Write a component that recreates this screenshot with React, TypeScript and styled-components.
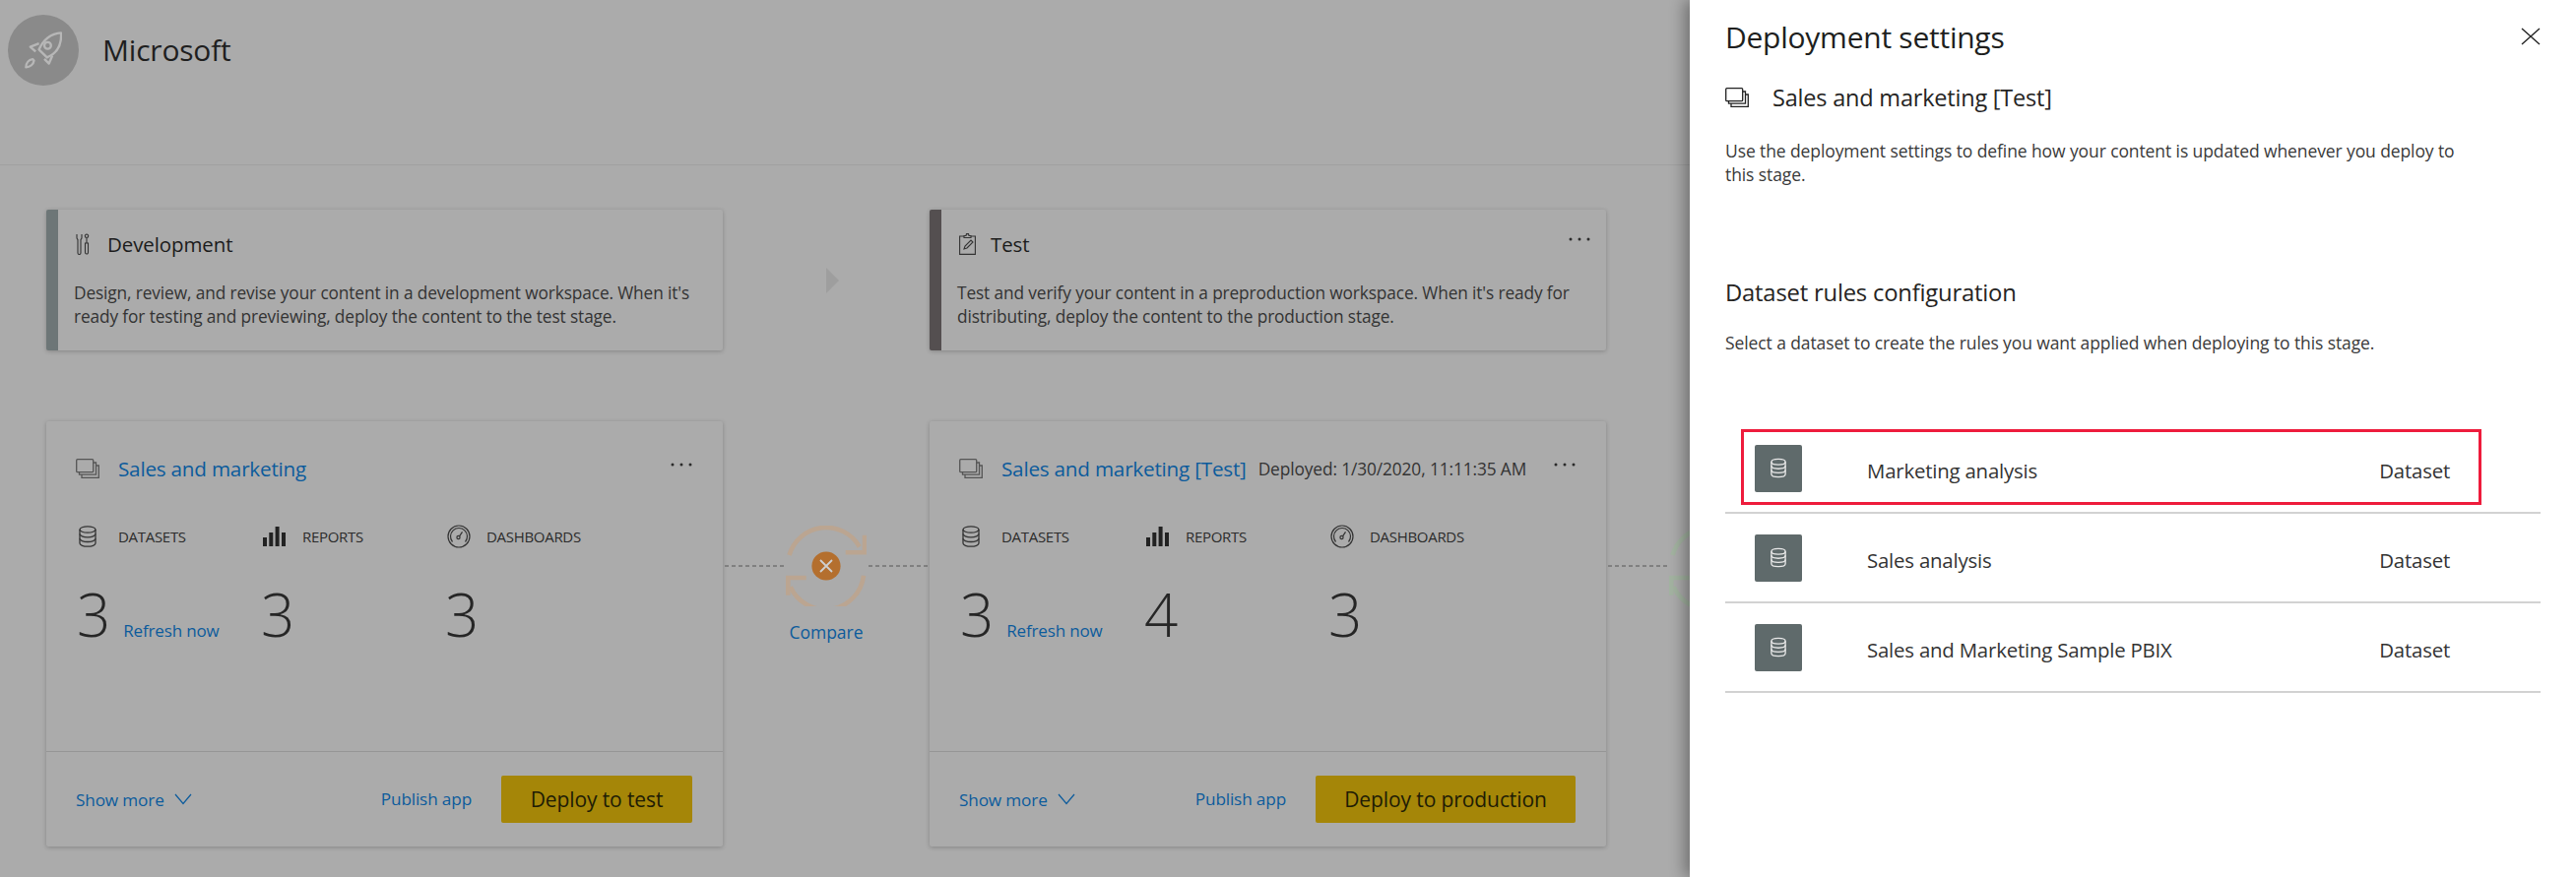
import React from "react";
import styled, { createGlobalStyle } from "styled-components";

const Global = createGlobalStyle`
  html, body { margin: 0; padding: 0; background: #ababab; }
  body { font-family: "Open Sans", "Noto Sans", "Liberation Sans", sans-serif; color: #1f1f1f; }
  #root { width: 2616px; height: 891px; overflow: hidden; }
`;

const Page = styled.div`
  position: relative;
  width: 2616px;
  height: 891px;
  overflow: hidden;
  background: #ababab;
`;
const Header = styled.header`
  height: 168px;
  box-sizing: border-box;
  border-bottom: 1px solid #a0a0a0;
  padding: 15px 0 0 8px;
  display: flex;
  align-items: flex-start;
  gap: 24px;
`;
const Avatar = styled.div`
  width: 72px;
  height: 72px;
  border-radius: 50%;
  background: #8a8a8a;
  display: flex;
  align-items: center;
  justify-content: center;
`;
const Org = styled.h1`
  margin: 0;
  font-size: 30px;
  font-weight: 400;
  line-height: 72px;
  color: #1f1f1f;
  letter-spacing: -0.2px;
`;
const Pipeline = styled.main`
  display: grid;
  grid-template-columns: 687px 210px 687px 210px;
  grid-template-rows: 143px 432px;
  row-gap: 72px;
  padding: 45px 0 0 47px;
`;
const StageCard = styled.section<{ $bar: string }>`
  box-sizing: border-box;
  border-left: 12px solid ${(p) => p.$bar};
  border-radius: 2px;
  padding: 20px 16px 0;
  background: #ababab;
  box-shadow: 0 1px 4px rgba(0, 0, 0, 0.22);
`;
const StageHead = styled.div`
  display: flex;
  align-items: center;
  height: 30px;
  margin-bottom: 23px;
  padding-left: 2px;
`;
const StageIcon = styled.span`
  width: 32px;
  display: flex;
`;
const StageName = styled.h2`
  margin: 0;
  font-size: 20.5px;
  font-weight: 400;
  color: #1c1c1c;
  letter-spacing: -0.1px;
`;
const StageMenu = styled.span`
  margin-left: auto;
  margin-top: -10px;
  display: flex;
`;
const StageText = styled.p`
  margin: 0;
  font-size: 17.3px;
  line-height: 24px;
  color: #333;
  letter-spacing: -0.12px;
  white-space: nowrap;
`;
const StepArrow = styled.div`
  display: flex;
  align-items: center;
  justify-content: center;
  &::before {
    content: "";
    border-left: 13px solid #9e9e9e;
    border-top: 13px solid transparent;
    border-bottom: 13px solid transparent;
    margin-left: 12px;
  }
`;
const WorkspaceCard = styled.section`
  display: flex;
  flex-direction: column;
  border-radius: 2px;
  background: #ababab;
  box-shadow: 0 1px 4px rgba(0, 0, 0, 0.22);
`;
const CardBody = styled.div`
  flex: 1;
  padding: 32px 31px 0 30px;
`;
const CardHead = styled.div`
  display: flex;
  align-items: center;
  height: 32px;
`;
const CardIcon = styled.span`
  width: 43px;
  display: flex;
`;
const CardTitle = styled.a`
  font-size: 20.7px;
  font-weight: 400;
  color: #0c5b9c;
  letter-spacing: -0.22px;
  white-space: nowrap;
`;
const Deployed = styled.span`
  font-size: 17.3px;
  color: #333;
  margin-left: 12px;
  letter-spacing: -0.1px;
  white-space: nowrap;
`;
const CardMenu = styled.span`
  margin-left: auto;
  margin-top: -8px;
  display: flex;
`;
const Stats = styled.div<{ $col: number }>`
  display: grid;
  grid-template-columns: ${(p) => p.$col}px ${(p) => p.$col}px 1fr;
  margin-top: 38px;
`;
const Stat = styled.div`
  display: flex;
  flex-direction: column;
`;
const StatHead = styled.div`
  display: flex;
  align-items: center;
  height: 30px;
`;
const StatIcon = styled.span`
  width: 43px;
  padding-left: 3px;
  box-sizing: border-box;
  display: flex;
`;
const StatLabel = styled.span`
  font-size: 15px;
  color: #2b2b2b;
  letter-spacing: -0.3px;
`;
const StatValue = styled.div`
  display: flex;
  align-items: baseline;
  margin-top: 29px;
  padding-left: 1px;
`;
const Num = styled.span`
  font-size: 60px;
  line-height: 70px;
  font-weight: 300;
  color: #262626;
`;
const Refresh = styled.a`
  font-size: 17px;
  color: #0c5b9c;
  margin-left: 13px;
  letter-spacing: -0.15px;
  white-space: nowrap;
`;
const CardFoot = styled.footer`
  height: 97px;
  box-sizing: border-box;
  border-top: 1px solid #969696;
  padding: 24px 31px 0 30px;
  display: flex;
  align-items: flex-start;
`;
const ShowMore = styled.a`
  display: flex;
  align-items: center;
  gap: 10px;
  height: 48px;
  font-size: 17.2px;
  color: #0c5b9c;
  letter-spacing: -0.15px;
`;
const Publish = styled.a`
  margin-left: auto;
  margin-right: 30px;
  height: 48px;
  line-height: 48px;
  font-size: 17.2px;
  color: #0c5b9c;
  letter-spacing: -0.15px;
`;
const Deploy = styled.button<{ $w: number }>`
  width: ${(p) => p.$w}px;
  height: 48px;
  border: 0;
  border-radius: 2px;
  background: #a58608;
  color: #201c05;
  font: 400 21px "Open Sans", "Noto Sans", sans-serif;
  letter-spacing: -0.1px;
  padding: 0;
`;
const Connector = styled.div`
  padding-top: 106px;
  display: flex;
  flex-direction: column;
  align-items: center;
`;
const ConnectorRow = styled.div`
  display: flex;
  align-items: center;
  width: 100%;
`;
const Dash = styled.span`
  flex: 1;
  height: 2px;
  margin: 0 2px;
  background: repeating-linear-gradient(90deg, #808080 0 4px, transparent 4px 7px);
`;
const CompareLink = styled.a`
  margin-top: 14px;
  font-size: 17.5px;
  line-height: 24px;
  color: #0c5b9c;
`;
const Panel = styled.aside`
  position: absolute;
  top: 0;
  right: 0;
  bottom: 0;
  width: 900px;
  box-sizing: border-box;
  padding: 0 36px;
  background: #fff;
  box-shadow: -6px 0 14px rgba(0, 0, 0, 0.32);
`;
const PanelHead = styled.div`
  display: flex;
  align-items: center;
  justify-content: space-between;
  height: 74px;
`;
const PanelTitle = styled.h2`
  margin: 0;
  font-size: 30px;
  font-weight: 400;
  color: #201f1e;
  letter-spacing: -0.25px;
`;
const CloseButton = styled.span`
  display: flex;
`;
const WorkspaceLine = styled.div`
  display: flex;
  align-items: center;
  height: 32px;
  margin-top: 9px;
`;
const WorkspaceName = styled.span`
  margin-left: 24px;
  font-size: 23.5px;
  color: #252423;
  letter-spacing: -0.2px;
`;
const PanelText = styled.p`
  margin: 26px 0 0;
  width: 760px;
  font-size: 17.5px;
  line-height: 24px;
  color: #3a3a3a;
  letter-spacing: -0.1px;
`;
const SectionTitle = styled.h3`
  margin: 92px 0 0;
  font-size: 23.8px;
  line-height: 32px;
  font-weight: 400;
  color: #252423;
  letter-spacing: -0.2px;
`;
const SectionText = styled(PanelText)`
  margin-top: 23px;
  width: auto;
`;
const Rows = styled.div`
  margin-top: 71px;
  width: 828px;
`;
const Row = styled.div`
  position: relative;
  display: flex;
  align-items: center;
  height: 91px;
  box-sizing: border-box;
  padding: 0 92px 0 30px;
  border-bottom: 2px solid #d2d2d2;
`;
const Tile = styled.span`
  width: 48px;
  height: 48px;
  border-radius: 2px;
  background: #5f6a6b;
  display: flex;
  align-items: center;
  justify-content: center;
  margin-right: 66px;
`;
const RowName = styled.span`
  flex: 1;
  font-size: 20.4px;
  color: #333;
  letter-spacing: -0.2px;
  padding-top: 4px;
`;
const RowKind = styled.span`
  font-size: 20.4px;
  color: #333;
  letter-spacing: -0.2px;
  padding-top: 4px;
`;
const Highlight = styled.div`
  position: absolute;
  left: 16px;
  top: 5px;
  width: 752px;
  height: 77px;
  box-sizing: border-box;
  border: 3.5px solid #ee1c3c;
  pointer-events: none;
`;

const Dots = ({ color = "#2b2b2b" }: { color?: string }) => (
  <svg width="22" height="4" viewBox="0 0 22 4" fill={color}>
    <circle cx="2" cy="2" r="1.5" />
    <circle cx="11" cy="2" r="1.5" />
    <circle cx="20" cy="2" r="1.5" />
  </svg>
);
const StackIcon = ({ size = 24, color = "#555" }: { size?: number; color?: string }) => (
  <svg width={size} height={(size * 20) / 24} viewBox="0 0 24 20" fill="none" stroke={color} strokeWidth="1.3">
    <rect x="0.7" y="0.7" width="17" height="13" rx="1" />
    <path d="M3.5 14v2.2H20.5V4h-2.8M6 16.3v3h17.3V7h-2.8" />
  </svg>
);
const DbIcon = ({ color = "#333", w = 18, h = 22, sw = 1.3 }: { color?: string; w?: number; h?: number; sw?: number }) => (
  <svg width={w} height={h} viewBox="0 0 18 22" fill="none" stroke={color} strokeWidth={sw}>
    <ellipse cx="9" cy="4" rx="8" ry="3.2" />
    <path d="M1 4v14c0 1.8 3.6 3.2 8 3.2s8-1.4 8-3.2V4" />
    <path d="M1 8.6c0 1.8 3.6 3.2 8 3.2s8-1.4 8-3.2M1 13.3c0 1.8 3.6 3.2 8 3.2s8-1.4 8-3.2" />
  </svg>
);
const BarsIcon = () => (
  <svg width="23" height="20" viewBox="0 0 23 20" fill="#222">
    <rect x="0" y="11" width="4" height="9" />
    <rect x="6.3" y="6" width="4" height="14" />
    <rect x="12.6" y="0" width="4" height="20" />
    <rect x="19" y="6" width="4" height="14" />
  </svg>
);
const GaugeIcon = () => (
  <svg width="24" height="24" viewBox="0 0 24 24" fill="none" stroke="#333" strokeWidth="1.2">
    <circle cx="12" cy="12" r="11" />
    <path d="M5.5 17.5a8.5 8.5 0 1 1 13 0" />
    <circle cx="11.5" cy="13" r="1.6" />
    <path d="M12.5 11.8l3-4.5" />
  </svg>
);
const Rocket = () => (
  <svg width="38" height="38" viewBox="75 100 112 112" fill="none" stroke="#b7b7b7" strokeWidth="7" strokeLinejoin="round">
    <path d="M184 104c-26 2-50 14-66 50l24 24c34-14 44-44 42-74z" />
    <circle cx="144" cy="142" r="10" />
    <path d="M118 136l-26 10 16 14M158 172l-10 24-14-14" />
    <path d="M99 183c-12 2-20 12-20 24 12 0 22-8 24-20z" />
  </svg>
);
const ToolsIcon = () => (
  <svg width="14" height="22" viewBox="0 0 14 22" fill="none" stroke="#333" strokeWidth="1.1">
    <path d="M1 1v3.5c0 1 .6 1.6 1 2V20a1.500 1.500 0 0 0 3 0V6.500c.4-.4 1-1 1-2V1" />
    <path d="M11 1a1.700 1.700 0 0 0-1.700 1.800c0 1 .7 1.700 1.700 1.700s1.700-.7 1.700-1.700A1.700 1.700 0 0 0 11 1zM11 4.500V10M9.500 10h3v9.500a1.500 1.500 0 0 1-3 0z" />
  </svg>
);
const ClipboardIcon = () => (
  <svg width="17" height="22" viewBox="0 0 17 22" fill="none" stroke="#333" strokeWidth="1.1">
    <path d="M5 3H.6v18.400h15.800V3H12" />
    <path d="M5 4.500V2.500h2l.5-1.900h2l.5 1.900h2v2z" />
    <path d="M5 16l1-3 6-6 2 2-6 6z" />
  </svg>
);
const Chevron = () => (
  <svg width="18" height="12" viewBox="0 0 18 12" fill="none" stroke="#0c5b9c" strokeWidth="1.2">
    <path d="M1 1l8 9.500L17 1" />
  </svg>
);
const CloseIcon = () => (
  <svg width="20" height="18" viewBox="0 0 20 18" fill="none" stroke="#222" strokeWidth="1.4">
    <path d="M1 1l18 16M19 1L1 17" />
  </svg>
);
const SyncIcon = ({ ring, badge }: { ring: string; badge: string }) => (
  <svg width="82" height="82" viewBox="-41 -41 82 82" fill="none" stroke={ring} strokeWidth="4.6">
    <path d="M-37.500 -11A39 39 0 0 1 33.800 -19.500" />
    <path d="M19.700 -13.700H39V-31.300" />
    <path d="M38 9.700A39 39 0 0 1 -36.300 21.300" />
    <path d="M-38.700 29.700V12H-20.300" />
    <circle cx="0" cy="0" r="14.600" fill={badge} stroke="none" />
    <path d="M-6 -6L6 6M6 -6L-6 6" stroke="#cfcfcf" strokeWidth="1.800" />
  </svg>
);

type StatData = { label: string; value: string; icon: React.ReactNode; refresh?: boolean };
const stats = (reports: string): StatData[] => [
  { label: "DATASETS", value: "3", icon: <DbIcon />, refresh: true },
  { label: "REPORTS", value: reports, icon: <BarsIcon /> },
  { label: "DASHBOARDS", value: "3", icon: <GaugeIcon /> },
];

const Workspace = ({
  title, deployed, reports, deploy, deployWidth, col,
}: { title: string; deployed?: string; reports: string; deploy: string; deployWidth: number; col: number }) => (
  <WorkspaceCard>
    <CardBody>
      <CardHead>
        <CardIcon><StackIcon /></CardIcon>
        <CardTitle>{title}</CardTitle>
        {deployed && <Deployed>{deployed}</Deployed>}
        <CardMenu><Dots /></CardMenu>
      </CardHead>
      <Stats $col={col}>
        {stats(reports).map((s) => (
          <Stat key={s.label}>
            <StatHead>
              <StatIcon>{s.icon}</StatIcon>
              <StatLabel>{s.label}</StatLabel>
            </StatHead>
            <StatValue>
              <Num>{s.value}</Num>
              {s.refresh && <Refresh>Refresh now</Refresh>}
            </StatValue>
          </Stat>
        ))}
      </Stats>
    </CardBody>
    <CardFoot>
      <ShowMore>Show more <Chevron /></ShowMore>
      <Publish>Publish app</Publish>
      <Deploy $w={deployWidth}>{deploy}</Deploy>
    </CardFoot>
  </WorkspaceCard>
);

const Compare = ({ ring, badge, label }: { ring: string; badge: string; label?: string }) => (
  <Connector>
    <ConnectorRow>
      <Dash />
      <SyncIcon ring={ring} badge={badge} />
      <Dash />
    </ConnectorRow>
    {label && <CompareLink>{label}</CompareLink>}
  </Connector>
);

const datasets = ["Marketing analysis", "Sales analysis", "Sales and Marketing Sample PBIX"];

export default function App() {
  return (
    <Page>
      <Global />
      <Header>
        <Avatar><Rocket /></Avatar>
        <Org>Microsoft</Org>
      </Header>
      <Pipeline>
        <StageCard $bar="#6d7677">
          <StageHead>
            <StageIcon><ToolsIcon /></StageIcon>
            <StageName>Development</StageName>
          </StageHead>
          <StageText>
            Design, review, and revise your content in a development workspace. When it's
            <br />
            ready for testing and previewing, deploy the content to the test stage.
          </StageText>
        </StageCard>
        <StepArrow />
        <StageCard $bar="#544f50">
          <StageHead>
            <StageIcon><ClipboardIcon /></StageIcon>
            <StageName>Test</StageName>
            <StageMenu><Dots /></StageMenu>
          </StageHead>
          <StageText>
            Test and verify your content in a preproduction workspace. When it's ready for
            <br />
            distributing, deploy the content to the production stage.
          </StageText>
        </StageCard>
        <div />
        <Workspace title="Sales and marketing" reports="3" deploy="Deploy to test" deployWidth={194} col={187} />
        <Compare ring="#bba591" badge="#b46f2e" label="Compare" />
        <Workspace
          title="Sales and marketing [Test]"
          deployed="Deployed: 1/30/2020, 11:11:35 AM"
          reports="4"
          deploy="Deploy to production"
          deployWidth={264}
          col={187}
        />
        <Compare ring="#a3b3a1" badge="#6f8f6c" />
      </Pipeline>
      <Panel>
        <PanelHead>
          <PanelTitle>Deployment settings</PanelTitle>
          <CloseButton><CloseIcon /></CloseButton>
        </PanelHead>
        <WorkspaceLine>
          <StackIcon color="#222" />
          <WorkspaceName>Sales and marketing [Test]</WorkspaceName>
        </WorkspaceLine>
        <PanelText>
          Use the deployment settings to define how your content is updated whenever you deploy to this stage.
        </PanelText>
        <SectionTitle>Dataset rules configuration</SectionTitle>
        <SectionText>Select a dataset to create the rules you want applied when deploying to this stage.</SectionText>
        <Rows>
          {datasets.map((d, i) => (
            <Row key={d}>
              {i === 0 && <Highlight />}
              <Tile><DbIcon color="#e8e8e8" w={16} h={21} sw={1.5} /></Tile>
              <RowName>{d}</RowName>
              <RowKind>Dataset</RowKind>
            </Row>
          ))}
        </Rows>
      </Panel>
    </Page>
  );
}
